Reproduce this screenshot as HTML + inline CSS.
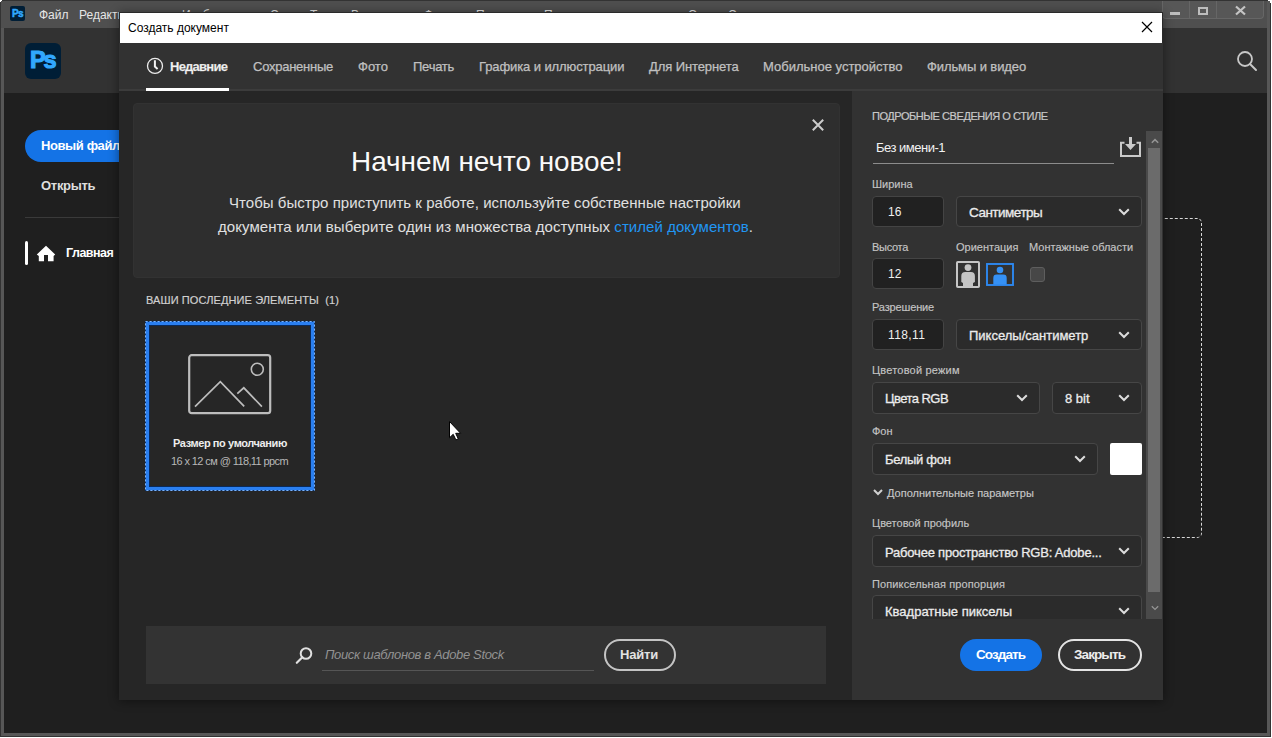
<!DOCTYPE html>
<html><head><meta charset="utf-8">
<style>
*{margin:0;padding:0;box-sizing:border-box}
html,body{width:1272px;height:738px;overflow:hidden;background:#ffffff;font-family:"Liberation Sans",sans-serif}
.a{position:absolute}
.t{position:absolute;white-space:nowrap;line-height:normal}
.menu{position:absolute;top:8px;font-size:12px;color:#e6e6e6;white-space:nowrap}
.tab{position:absolute;top:59px;font-size:13px;color:#c0c0c0;white-space:nowrap;-webkit-text-stroke:0.25px #c0c0c0}
.lbl{position:absolute;font-size:11px;color:#c4c4c4;white-space:nowrap;-webkit-text-stroke:0.15px #c4c4c4}
.inp{position:absolute;background:#212121;border:1px solid #444444;border-radius:4px}
.dd{position:absolute;background:#2b2b2b;border:1px solid #464646;border-radius:4px}
.ddt{position:absolute;font-size:13px;color:#ececec;white-space:nowrap;-webkit-text-stroke:0.3px #ececec}
.itx{position:absolute;font-size:12px;color:#f0f0f0;white-space:nowrap}
svg{position:absolute;overflow:visible}
</style></head><body>
<!-- window frame -->
<div class="a" style="left:0;top:0;width:1271px;height:737px;background:#333333"></div>
<div class="a" style="left:1px;top:1px;width:1269px;height:735px;background:#575757"></div>
<div class="a" style="left:1268px;top:0;width:3px;height:1px;background:#fff"></div><div class="a" style="left:1270px;top:1px;width:1px;height:2px;background:#fff"></div><div class="a" style="left:0;top:0;width:2px;height:1px;background:#fff"></div><div class="a" style="left:0;top:1px;width:1px;height:1px;background:#fff"></div>
<!-- menubar -->
<div class="a" style="left:1px;top:1px;width:1266px;height:27px;background:#4f4f4f"></div>
<div class="a" style="left:10px;top:6px;width:15px;height:15px;background:#001e36;border-radius:2px"></div>
<div class="t" style="left:12px;top:8px;font-size:10px;font-weight:900;color:#31a8ff;letter-spacing:-0.6px;-webkit-text-stroke:0.5px #31a8ff">Ps</div>
<div class="menu" style="left:39px">Файл</div>
<div class="menu" style="left:79px">Редактирование</div>
<div class="menu" style="left:182px">Изображение</div>
<div class="menu" style="left:270px">Слои</div>
<div class="menu" style="left:310px">Текст</div>
<div class="menu" style="left:351px">Выделение</div>
<div class="menu" style="left:424px">Фильтр</div>
<div class="menu" style="left:476px">Просмотр</div>
<div class="menu" style="left:544px">Подключаемые модули</div>
<div class="menu" style="left:688px">Окно</div>
<div class="menu" style="left:728px">Справка</div>
<!-- caption buttons -->
<div class="a" style="left:1162px;top:1px;width:102px;height:18px;background:#575757;border:1px solid #666;border-top:none;border-radius:0 0 4px 4px"></div>
<div class="a" style="left:1189px;top:1px;width:1px;height:18px;background:#666"></div>
<div class="a" style="left:1216px;top:1px;width:1px;height:18px;background:#666"></div>
<div class="a" style="left:1170px;top:12px;width:10px;height:3px;background:#bdbdbd"></div>
<div class="a" style="left:1198px;top:7px;width:10px;height:8px;border:2px solid #bdbdbd"></div>
<svg style="left:1235px;top:6px" width="11" height="9"><path d="M1 0.5 L10 8.5 M10 0.5 L1 8.5" stroke="#c4c4c4" stroke-width="2.2"/></svg>

<!-- app area -->
<div class="a" style="left:4px;top:28px;width:1263px;height:705px;background:#1f1f1f"></div>
<div class="a" style="left:4px;top:28px;width:1263px;height:65px;background:#323232"></div>
<!-- ps logo -->
<div class="a" style="left:25px;top:43px;width:36px;height:36px;background:#001e36;border-radius:6px"></div>
<div class="t" style="left:30px;top:47px;font-size:23.5px;font-weight:700;color:#31a8ff;letter-spacing:-2.2px;-webkit-text-stroke:1.1px #31a8ff">Ps</div>
<!-- header search -->
<svg style="left:1236px;top:50px" width="22" height="22"><circle cx="9" cy="9" r="7" fill="none" stroke="#c8c8c8" stroke-width="1.8"/><path d="M14 14 L20 20" stroke="#c8c8c8" stroke-width="2" stroke-linecap="round"/></svg>
<!-- left nav -->
<div class="a" style="left:25px;top:130px;width:120px;height:32px;background:#1473e6;border-radius:16px"></div>
<div class="t" style="left:41px;top:138px;font-size:13px;font-weight:700;color:#fff;letter-spacing:-0.4px">Новый файл</div>
<div class="t" style="left:41px;top:178px;font-size:13px;font-weight:700;color:#dedede;letter-spacing:-0.3px">Открыть</div>
<div class="a" style="left:25px;top:217px;width:100px;height:1px;background:#3a3a3a"></div>
<div class="a" style="left:25px;top:241px;width:3px;height:24px;background:#fff;border-radius:2px"></div>
<svg style="left:37px;top:245px" width="19" height="17"><path d="M9 0.8 L18.2 9.5 L16.6 11 L16.6 16.2 L11 16.2 L11 10.1 L7 10.1 L7 16.2 L1.8 16.2 L1.8 11 L-0.2 9.5 Z" fill="#fff"/></svg>
<div class="t" style="left:66px;top:246px;font-size:12.5px;font-weight:700;color:#fff;letter-spacing:-0.5px">Главная</div>
<!-- dashed rect -->
<div class="a" style="left:900px;top:218px;width:302px;height:320px;border:1px dashed #d8d8d8;border-radius:5px"></div>
<!-- ============ DIALOG ============ -->
<div class="a" style="left:119px;top:12px;width:1044px;height:688px;background:#262626;box-shadow:0 1px 10px rgba(0,0,0,0.45)"></div>
<div class="a" style="left:119px;top:12px;width:1044px;height:31px;background:#2a2a2a"></div>
<!-- title bar -->
<div class="a" style="left:120px;top:13px;width:1042px;height:30px;background:#ffffff"></div>
<div class="t" style="left:128px;top:21px;font-size:12px;color:#000">Создать документ</div>
<svg style="left:1142px;top:22px" width="10" height="10"><path d="M0 0 L10 10 M10 0 L0 10" stroke="#000" stroke-width="1.2"/></svg>
<!-- tab bar -->
<div class="a" style="left:119px;top:43px;width:1044px;height:48px;background:#323232"></div>
<div class="a" style="left:119px;top:89px;width:1044px;height:2px;background:#3c3c3c"></div>
<div class="a" style="left:146px;top:88px;width:83px;height:3px;background:#ffffff"></div>
<svg style="left:146px;top:57px" width="18" height="18"><circle cx="9" cy="8.9" r="7.5" fill="none" stroke="#ececec" stroke-width="1.3"/><path d="M8.9 3.2 L8.9 9.6 L11.6 11.9" fill="none" stroke="#f4f4f4" stroke-width="2"/></svg>
<div class="tab" style="left:170px;color:#f5f5f5;font-weight:700;letter-spacing:-0.75px">Недавние</div>
<div class="tab" style="left:253px;letter-spacing:-0.25px">Сохраненные</div>
<div class="tab" style="left:358px">Фото</div>
<div class="tab" style="left:413px;letter-spacing:-0.25px">Печать</div>
<div class="tab" style="left:479px;letter-spacing:-0.1px">Графика и иллюстрации</div>
<div class="tab" style="left:649px;letter-spacing:-0.1px">Для Интернета</div>
<div class="tab" style="left:763px">Мобильное устройство</div>
<div class="tab" style="left:927px;letter-spacing:-0.1px">Фильмы и видео</div>
<!-- welcome panel -->
<div class="a" style="left:133px;top:103px;width:707px;height:175px;background:#2e2e2e;border:1px solid #323232;border-radius:4px"></div>
<svg style="left:812px;top:119px" width="12" height="12"><path d="M0.8 0.8 L11.2 11.2 M11.2 0.8 L0.8 11.2" stroke="#cccccc" stroke-width="2"/></svg>
<div class="t" style="left:351px;top:146px;font-size:27.9px;color:#fafafa">Начнем нечто новое!</div>
<div class="t" style="left:229px;top:194px;font-size:15px;color:#e0e0e0;letter-spacing:0.04px">Чтобы быстро приступить к работе, используйте собственные настройки</div>
<div class="t" style="left:218px;top:218px;font-size:15px;color:#e0e0e0;letter-spacing:0.06px">документа или выберите один из множества доступных <span style="color:#2196f3">стилей документов</span>.</div>
<!-- recent -->
<div class="t" style="left:146px;top:294px;font-size:11px;color:#d0d0d0;letter-spacing:0.1px;-webkit-text-stroke:0.2px #d0d0d0">ВАШИ ПОСЛЕДНИЕ ЭЛЕМЕНТЫ &nbsp;(1)</div>
<div class="a" style="left:145px;top:321px;width:170px;height:170px;background:#262626;border:1px solid #0a2f63;box-shadow:inset 0 0 0 3px #2a7ff0,inset 0 0 0 4px #0a2a5a"></div>
<svg style="left:145px;top:321px" width="170" height="170"><rect x="0.5" y="0.5" width="169" height="169" fill="none" stroke="#7ab4ff" stroke-width="1" stroke-dasharray="2.2 1.8"/></svg>
<svg style="left:188px;top:354px" width="84" height="60"><rect x="1.2" y="1.2" width="81" height="58" rx="2.5" fill="none" stroke="#bdbdbd" stroke-width="2.2"/><circle cx="69.3" cy="15.2" r="6" fill="none" stroke="#bdbdbd" stroke-width="1.6"/><path d="M7 52.6 L32.3 27.7 L56.2 52.3 M49.3 39.6 L55.8 33.8 L73.9 52.6" fill="none" stroke="#bdbdbd" stroke-width="1.7"/></svg>
<div class="t" style="left:173px;top:437px;font-size:11px;font-weight:700;color:#ededed;letter-spacing:-0.4px">Размер по умолчанию</div>
<div class="t" style="left:171px;top:455px;font-size:11px;color:#b8b8b8;letter-spacing:-0.6px">16 x 12 см @ 118,11 ppcm</div>
<!-- search panel -->
<div class="a" style="left:146px;top:626px;width:680px;height:58px;background:#333333"></div>
<svg style="left:295px;top:646px" width="19" height="19"><circle cx="11" cy="7.5" r="5.3" fill="none" stroke="#e0e0e0" stroke-width="2"/><path d="M7.3 11.3 L1.8 16.8" stroke="#e0e0e0" stroke-width="2.2" stroke-linecap="round"/></svg>
<div class="t" style="left:325px;top:647px;font-size:13px;font-style:italic;color:#929292;letter-spacing:-0.35px">Поиск шаблонов в Adobe Stock</div>
<div class="a" style="left:322px;top:670px;width:272px;height:1px;background:#555"></div>
<div class="a" style="left:604px;top:639px;width:72px;height:32px;border:2px solid #c4c4c4;border-radius:16px"></div>
<div class="t" style="left:620px;top:647px;font-size:13px;font-weight:700;color:#e2e2e2;letter-spacing:-0.2px">Найти</div>
<!-- ============ RIGHT PANEL ============ -->
<div class="a" style="left:852px;top:91px;width:311px;height:609px;background:#323232"></div>
<div class="t" style="left:872px;top:110px;font-size:11px;color:#c8c8c8;letter-spacing:-0.45px;-webkit-text-stroke:0.2px #c8c8c8">ПОДРОБНЫЕ СВЕДЕНИЯ О СТИЛЕ</div>
<!-- clip area -->
<div class="a" style="left:852px;top:131px;width:294px;height:488px;overflow:hidden">
 <div class="a" style="left:-852px;top:-131px;width:1272px;height:738px">
  <div class="t" style="left:876px;top:140px;font-size:13px;color:#f2f2f2;letter-spacing:-0.5px">Без имени-1</div>
  <div class="a" style="left:873px;top:163px;width:241px;height:1px;background:#8c8c8c"></div>
  <svg style="left:1120px;top:136px" width="22" height="22"><path d="M4.5 6.8 L1 6.8 L1 20 L20 20 L20 6.8 L16.5 6.8" fill="none" stroke="#cacaca" stroke-width="2"/><path d="M9 1 L9 8 L5 8 L10.5 14 L16 8 L12 8 L12 1 Z" fill="#cacaca"/></svg>

  <div class="lbl" style="left:872px;top:178px">Ширина</div>
  <div class="inp" style="left:872px;top:196px;width:72px;height:31px"></div>
  <div class="itx" style="left:888px;top:205px">16</div>
  <div class="dd" style="left:956px;top:196px;width:186px;height:31px"></div>
  <div class="ddt" style="left:969px;top:205px;font-size:13.5px;letter-spacing:-0.5px">Сантиметры</div>
  <svg style="left:1118px;top:208px" width="12" height="8"><path d="M1.2 1.2 L6 6 L10.8 1.2" fill="none" stroke="#dcdcdc" stroke-width="2"/></svg>

  <div class="lbl" style="left:872px;top:241px;letter-spacing:-0.3px">Высота</div>
  <div class="lbl" style="left:956px;top:241px">Ориентация</div>
  <div class="lbl" style="left:1029px;top:241px">Монтажные области</div>
  <div class="inp" style="left:872px;top:258px;width:72px;height:31px"></div>
  <div class="itx" style="left:888px;top:267px">12</div>
  <svg style="left:956px;top:261px" width="24" height="27"><rect x="1" y="1" width="22" height="25" rx="0.8" fill="none" stroke="#c6c6c6" stroke-width="2"/><circle cx="12" cy="6.6" r="3.4" fill="#c4c4c4"/><path d="M5.3 21 L5.3 15 Q5.3 11 9.3 11 L14.9 11 Q18.9 11 18.9 15 L18.9 21 L17 22 L17 25 L7 25 L7 22 Z" fill="#c4c4c4"/></svg>
  <svg style="left:986px;top:263px" width="28" height="23"><rect x="1" y="1" width="26" height="21" fill="none" stroke="#2d88f0" stroke-width="1.9"/><circle cx="14" cy="7" r="3.3" fill="#3591f5"/><path d="M7.3 21.5 L7.3 15 Q7.3 11.6 10.7 11.6 L17.3 11.6 Q20.7 11.6 20.7 15 L20.7 21.5 Z" fill="#3591f5"/></svg>
  <div class="a" style="left:1030px;top:267px;width:15px;height:15px;background:#474747;border:1px solid #5e5e5e;border-radius:3px"></div>

  <div class="lbl" style="left:872px;top:301px;letter-spacing:-0.15px">Разрешение</div>
  <div class="inp" style="left:872px;top:319px;width:72px;height:31px"></div>
  <div class="itx" style="left:888px;top:328px;letter-spacing:0.4px">118,11</div>
  <div class="dd" style="left:956px;top:319px;width:186px;height:31px"></div>
  <div class="ddt" style="left:969px;top:328px">Пикселы/сантиметр</div>
  <svg style="left:1118px;top:331px" width="12" height="8"><path d="M1.2 1.2 L6 6 L10.8 1.2" fill="none" stroke="#dcdcdc" stroke-width="2"/></svg>

  <div class="lbl" style="left:872px;top:364px;letter-spacing:0.2px">Цветовой режим</div>
  <div class="dd" style="left:872px;top:382px;width:168px;height:32px"></div>
  <div class="ddt" style="left:885px;top:391px;letter-spacing:-0.55px">Цвета RGB</div>
  <svg style="left:1016px;top:394px" width="12" height="8"><path d="M1.2 1.2 L6 6 L10.8 1.2" fill="none" stroke="#dcdcdc" stroke-width="2"/></svg>
  <div class="dd" style="left:1052px;top:382px;width:90px;height:32px"></div>
  <div class="ddt" style="left:1065px;top:391px">8 bit</div>
  <svg style="left:1118px;top:394px" width="12" height="8"><path d="M1.2 1.2 L6 6 L10.8 1.2" fill="none" stroke="#dcdcdc" stroke-width="2"/></svg>

  <div class="lbl" style="left:872px;top:425px">Фон</div>
  <div class="dd" style="left:872px;top:443px;width:226px;height:32px"></div>
  <div class="ddt" style="left:885px;top:452px;letter-spacing:-0.3px">Белый фон</div>
  <svg style="left:1074px;top:455px" width="12" height="8"><path d="M1.2 1.2 L6 6 L10.8 1.2" fill="none" stroke="#dcdcdc" stroke-width="2"/></svg>
  <div class="a" style="left:1110px;top:443px;width:32px;height:32px;background:#fff;border-radius:2px"></div>

  <svg style="left:873px;top:489px" width="10" height="7"><path d="M1 1 L5 5 L9 1" fill="none" stroke="#d0d0d0" stroke-width="2"/></svg>
  <div class="lbl" style="left:887px;top:487px;color:#c8c8c8">Дополнительные параметры</div>

  <div class="lbl" style="left:872px;top:517px">Цветовой профиль</div>
  <div class="dd" style="left:872px;top:535px;width:270px;height:32px"></div>
  <div class="ddt" style="left:885px;top:545px;letter-spacing:-0.2px">Рабочее пространство RGB: Adobe...</div>
  <svg style="left:1118px;top:547px" width="12" height="8"><path d="M1.2 1.2 L6 6 L10.8 1.2" fill="none" stroke="#dcdcdc" stroke-width="2"/></svg>

  <div class="lbl" style="left:872px;top:578px;letter-spacing:0.12px">Попиксельная пропорция</div>
  <div class="dd" style="left:872px;top:595px;width:270px;height:32px"></div>
  <div class="ddt" style="left:885px;top:604px">Квадратные пикселы</div>
  <svg style="left:1118px;top:607px" width="12" height="8"><path d="M1.2 1.2 L6 6 L10.8 1.2" fill="none" stroke="#dcdcdc" stroke-width="2"/></svg>
 </div>
</div>
<!-- scrollbar -->
<div class="a" style="left:1146px;top:131px;width:16px;height:488px;background:#4a4a4a"></div>
<div class="a" style="left:1148px;top:148px;width:12px;height:444px;background:#6b6b6b"></div>
<svg style="left:1151px;top:138px" width="9" height="6"><path d="M0.8 4.8 L4 1.6 L7.2 4.8" fill="none" stroke="#959595" stroke-width="1.5"/></svg>
<svg style="left:1151px;top:605px" width="9" height="6"><path d="M0.8 1.2 L4 4.4 L7.2 1.2" fill="none" stroke="#959595" stroke-width="1.3"/></svg>
<!-- buttons -->
<div class="a" style="left:960px;top:639px;width:82px;height:32px;background:#1473e6;border-radius:16px"></div>
<div class="t" style="left:976px;top:647px;font-size:13.5px;font-weight:700;color:#fff;letter-spacing:-0.9px">Создать</div>
<div class="a" style="left:1058px;top:639px;width:84px;height:32px;border:2px solid #e4e4e4;border-radius:16px"></div>
<div class="t" style="left:1074px;top:647px;font-size:13.5px;font-weight:700;color:#ececec;letter-spacing:-0.9px">Закрыть</div>
<!-- cursor -->
<svg style="left:449px;top:421px" width="13" height="20"><path d="M0.5 0.5 L0.5 16.8 L4.2 13.3 L6.9 18.9 L9.3 17.9 L6.7 12.3 L11.6 12.3 Z" fill="#fff" stroke="#000" stroke-width="1"/></svg>
</body></html>
